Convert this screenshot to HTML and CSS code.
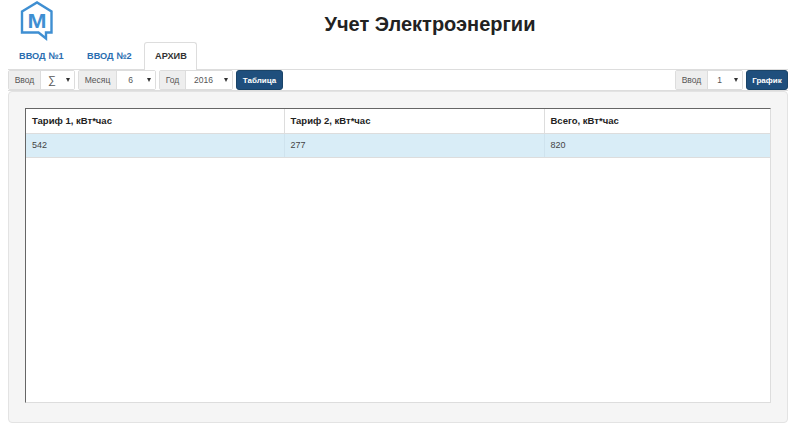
FILE: index.html
```html
<!DOCTYPE html>
<html lang="ru">
<head>
<meta charset="utf-8">
<title>Учет Электроэнергии</title>
<link rel="stylesheet" href="styles.css">
</head>
<body>
<header class="head">
  <svg class="logo" width="34" height="40" viewBox="0 0 34 40" aria-hidden="true">
    <path d="M2 10.5 L17 1.5 L31.5 10.5 V31.5 H26 V37.5 L18.5 31.5 H2 Z" fill="#fff" stroke="#3f8fd2" stroke-width="2.4" stroke-linejoin="miter"/>
    <text x="7.5" y="27" textLength="19" lengthAdjust="spacingAndGlyphs" class="logo-m">M</text>
  </svg>
  <h1 class="title">Учет Электроэнергии</h1>
</header>
<nav class="tabs">
  <a class="tab">ВВОД №1</a>
  <a class="tab">ВВОД №2</a>
  <a class="tab active">АРХИВ</a>
</nav>
<div class="toolbar">
  <div class="group">
    <div class="field"><span class="label w33">Ввод</span><span class="sel w34"><span class="val sigma">∑</span><i class="arrow"></i></span></div>
    <div class="field"><span class="label w38">Месяц</span><span class="sel w39"><span class="val">6</span><i class="arrow"></i></span></div>
    <div class="field"><span class="label w26">Год</span><span class="sel w47"><span class="val">2016</span><i class="arrow"></i></span></div>
    <button class="btn w47">Таблица</button>
  </div>
  <div class="group">
    <div class="field"><span class="label w33">Ввод</span><span class="sel w35"><span class="val">1</span><i class="arrow"></i></span></div>
    <button class="btn w42">График</button>
  </div>
</div>
<main class="well">
  <div class="table-box">
    <table class="data">
      <thead><tr><th class="col-a">Тариф 1, кВт*час</th><th class="col-b">Тариф 2, кВт*час</th><th>Всего, кВт*час</th></tr></thead>
      <tbody><tr><td>542</td><td>277</td><td>820</td></tr></tbody>
    </table>
  </div>
</main>
</body>
</html>
```
FILE: styles.css
```css
* { box-sizing: border-box; }
html, body { height: 100%; }
body {
  margin: 0;
  padding: 0 12px 5px 8px;
  background: #fff;
  font-family: "Liberation Sans", Arial, sans-serif;
  color: #333;
  display: flex;
  flex-direction: column;
  overflow: hidden;
}
.head { display: flex; align-items: flex-start; height: 42px; margin-right: -12px; padding-left: 12px; }
.logo { flex: none; margin-top: 1px; }
.logo-m { font: bold 21px "Liberation Sans", Arial, sans-serif; fill: #3f8fd2; }
.title {
  flex: 1;
  margin: 12px 0 0;
  padding-left: 6px;
  text-align: center;
  font-size: 20px;
  line-height: 24px;
  font-weight: bold;
  color: #222;
}
.tabs { display: flex; height: 28px; position: relative; z-index: 1; }
.tab {
  display: block;
  width: 66px;
  padding: 0 10px;
  line-height: 27px;
  font-size: 9.2px;
  font-weight: bold;
  color: #2a6db0;
  margin-right: 2px;
  border: 1px solid transparent;
  border-bottom: 0;
  border-radius: 3px 3px 0 0;
  white-space: nowrap;
}
.tab.active { width: 53px; color: #333; background: #fff; border-color: #ddd; }
.toolbar {
  display: flex;
  justify-content: space-between;
  height: 22px;
  margin-top: -1px;
  border: 1px solid #ddd;
  border-width: 1px 0 1px 0;
  font-size: 8.5px;
}
.group { display: flex; gap: 3px; height: 20px; }
.field { display: flex; height: 20px; border: 1px solid #ddd; border-radius: 2px; }
.label { display: flex; align-items: center; justify-content: center; background: #eee; color: #555; border-right: 1px solid #ddd; }
.sel { display: flex; align-items: center; position: relative; background: #fff; color: #555; padding-right: 11px; }
.val { flex: 1; text-align: center; }
.sigma { font-size: 11px; }
.arrow {
  position: absolute;
  right: 4px;
  top: 7px;
  border-left: 2.5px solid transparent;
  border-right: 2.5px solid transparent;
  border-top: 4px solid #333;
}
.w26 { width: 26px; } .w33 { width: 32px; } .w38 { width: 38px; }
.w34 { width: 33px; } .w35 { width: 34px; } .w39 { width: 38px; } .w47 { width: 46px; }
.btn {
  height: 20px;
  padding: 0;
  border: 1px solid #1a4468;
  border-radius: 3px;
  background: #1f4f7d;
  color: #fff;
  font: bold 8px "Liberation Sans", Arial, sans-serif;
}
.btn.w47 { width: 47px; }
.w42 { width: 42px; }
.well {
  flex: 1;
  padding: 16px 16px 19px;
  background: #f5f5f5;
  border: 1px solid #e3e3e3;
  border-radius: 4px;
  display: flex;
}
.table-box {
  flex: 1;
  background: #fff;
  border: 1px solid #ddd;
  border-top-color: #666;
  border-left-color: #666;
}
.data { width: 100%; border-collapse: collapse; table-layout: fixed; font-size: 9.5px; }
.col-a { width: 258px; }
.col-b { width: 260px; }
.data th, .data td { padding: 0 6px; text-align: left; border-right: 1px solid #ddd; }
.data th:last-child, .data td:last-child { border-right: 0; }
.data th { height: 24px; font-weight: bold; color: #222; border-bottom: 1px solid #ddd; }
.data td { height: 24px; background: #d9edf7; color: #444; border-bottom: 1px solid #ddd; border-right-color: #cfe3ee; font-size: 9px; }
```
